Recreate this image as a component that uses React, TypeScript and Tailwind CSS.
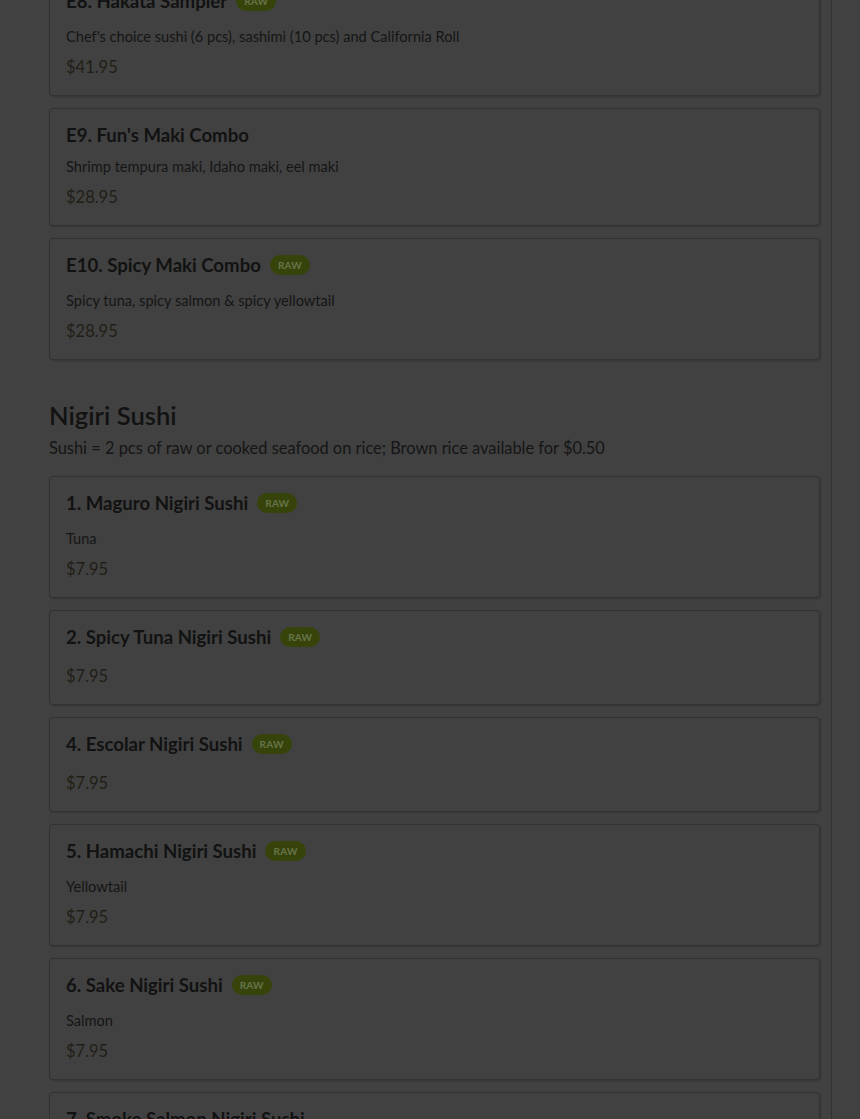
import React from 'react';

type Item = {
  name: string;
  desc?: string;
  price: string;
  raw?: boolean;
};

const combos: Item[] = [
  {
    name: 'E8. Hakata Sampler',
    desc: "Chef's choice sushi (6 pcs), sashimi (10 pcs) and California Roll",
    price: '$41.95',
    raw: true,
  },
  { name: "E9. Fun's Maki Combo", desc: 'Shrimp tempura maki, Idaho maki, eel maki', price: '$28.95' },
  {
    name: 'E10. Spicy Maki Combo',
    desc: 'Spicy tuna, spicy salmon & spicy yellowtail',
    price: '$28.95',
    raw: true,
  },
];

const nigiri: Item[] = [
  { name: '1. Maguro Nigiri Sushi', desc: 'Tuna', price: '$7.95', raw: true },
  { name: '2. Spicy Tuna Nigiri Sushi', price: '$7.95', raw: true },
  { name: '4. Escolar Nigiri Sushi', price: '$7.95', raw: true },
  { name: '5. Hamachi Nigiri Sushi', desc: 'Yellowtail', price: '$7.95', raw: true },
  { name: '6. Sake Nigiri Sushi', desc: 'Salmon', price: '$7.95', raw: true },
  { name: '7. Smoke Salmon Nigiri Sushi', desc: 'Smoked salmon', price: '$7.95' },
];

const MenuCard: React.FC<{ item: Item }> = ({ item }) => (
  <div className="rounded-[4px] border border-[#323232] bg-[#414141] px-4 pt-[15px] pb-4 shadow-[1px_1px_2px_rgba(0,0,0,0.18)]">
    <div className={`flex h-[22px] items-center ${item.raw ? 'mb-4' : 'mb-3'}`}>
      <h3 className="text-[18.6px] leading-[22px] font-bold text-[#121212]">{item.name}</h3>
      {item.raw && (
        <span className="ml-[9px] flex h-[20px] items-center rounded-full bg-[#36440b] px-[8px] text-[10px] font-bold tracking-wide text-[#66744a]">
          RAW
        </span>
      )}
    </div>
    {item.desc && (
      <p className="mb-[9px] text-[14.6px] leading-[18px] text-[#151515]">{item.desc}</p>
    )}
    <div className="text-[16.5px] leading-6 text-[#221e16]">{item.price}</div>
  </div>
);

export default function App() {
  return (
    <div
      className="h-[1119px] overflow-hidden bg-[#414141]"
      style={{ fontFamily: 'Lato, "Noto Sans", sans-serif' }}
    >
      <div className="min-h-[1119px] w-[832px] border-r border-[#323232] pl-[49px] pr-[11px]">
        <div className="-mt-[26px] flex flex-col gap-3">
          {combos.map((it) => (
            <MenuCard key={it.name} item={it} />
          ))}
        </div>

        <div className="mt-[39px]">
          <h2 className="text-[25.6px] leading-8 font-semibold text-[#121212]">Nigiri Sushi</h2>
          <p className="mt-[5px] text-[16.4px] leading-6 text-[#151515]">
            Sushi = 2 pcs of raw or cooked seafood on rice; Brown rice available for $0.50
          </p>
        </div>

        <div className="mt-[16px] flex flex-col gap-3">
          {nigiri.map((it) => (
            <MenuCard key={it.name} item={it} />
          ))}
        </div>
      </div>
    </div>
  );
}
